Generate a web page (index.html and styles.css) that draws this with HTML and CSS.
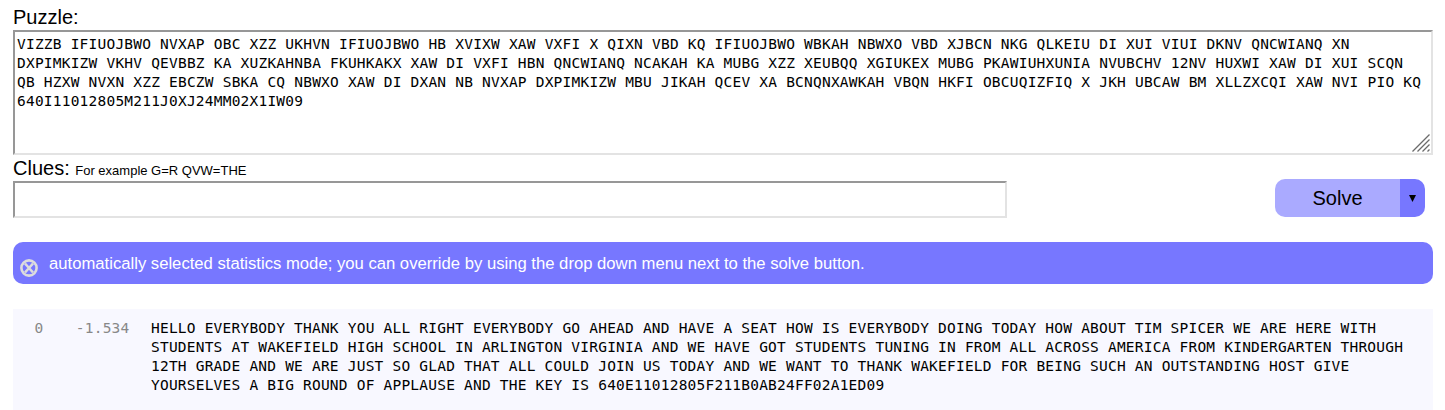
FILE: index.html
```html
<!DOCTYPE html>
<html lang="en">
<head>
<meta charset="utf-8">
<title>Puzzle Solver</title>
<link rel="stylesheet" href="styles.css">
</head>
<body>
<main class="page">
<label class="label" for="puzzle">Puzzle:</label>
<div class="puzzle-wrap">
<textarea id="puzzle" class="puzzle mono" spellcheck="false">VIZZB IFIUOJBWO NVXAP OBC XZZ UKHVN IFIUOJBWO HB XVIXW XAW VXFI X QIXN VBD KQ IFIUOJBWO WBKAH NBWXO VBD XJBCN NKG QLKEIU DI XUI VIUI DKNV QNCWIANQ XN
DXPIMKIZW VKHV QEVBBZ KA XUZKAHNBA FKUHKAKX XAW DI VXFI HBN QNCWIANQ NCAKAH KA MUBG XZZ XEUBQQ XGIUKEX MUBG PKAWIUHXUNIA NVUBCHV 12NV HUXWI XAW DI XUI SCQN
QB HZXW NVXN XZZ EBCZW SBKA CQ NBWXO XAW DI DXAN NB NVXAP DXPIMKIZW MBU JIKAH QCEV XA BCNQNXAWKAH VBQN HKFI OBCUQIZFIQ X JKH UBCAW BM XLLZXCQI XAW NVI PIO KQ
640I11012805M211J0XJ24MM02X1IW09</textarea>
<svg class="grip" viewBox="0 0 18 18"><path d="M0.5 17.5 17.5 0.5M5.5 17.5 17.5 5.5M10.5 17.5 17.5 10.5M15.5 17.5 17.5 15.5"/></svg>
</div>
<label class="label clues-label" for="clues">Clues: <small class="hint">For example G=R QVW=THE</small></label>
<div class="clues-row">
<input id="clues" class="clues" type="text">
<div class="solve-group">
<button class="solve">Solve</button>
<button class="mode" aria-label="Mode"><svg width="7" height="7" viewBox="0 0 7 7"><path d="M0 0H7L3.5 7Z"/></svg></button>
</div>
</div>
<div class="notice">
<svg class="close" viewBox="0 0 18 18"><circle cx="9" cy="9" r="7.6"/><path d="M5 4.5 13 13.5M13 4.5 5 13.5"/></svg>
<span class="message">automatically selected statistics mode; you can override by using the drop down menu next to the solve button.</span>
</div>
<div class="result mono">
<span class="index">0</span>
<span class="score">-1.534</span>
<div class="solution">HELLO EVERYBODY THANK YOU ALL RIGHT EVERYBODY GO AHEAD AND HAVE A SEAT HOW IS EVERYBODY DOING TODAY HOW ABOUT TIM SPICER WE ARE HERE WITH<br>STUDENTS AT WAKEFIELD HIGH SCHOOL IN ARLINGTON VIRGINIA AND WE HAVE GOT STUDENTS TUNING IN FROM ALL ACROSS AMERICA FROM KINDERGARTEN THROUGH<br>12TH GRADE AND WE ARE JUST SO GLAD THAT ALL COULD JOIN US TODAY AND WE WANT TO THANK WAKEFIELD FOR BEING SUCH AN OUTSTANDING HOST GIVE<br>YOURSELVES A BIG ROUND OF APPLAUSE AND THE KEY IS 640E11012805F211B0AB24FF02A1ED09</div>
</div>
</main>
</body>
</html>
```
FILE: styles.css
```css
* { box-sizing: border-box; }
body {
  margin: 0;
  background: #fff;
  color: #000;
  font-family: "Liberation Sans", Arial, sans-serif;
}
.page {
  display: flex;
  flex-direction: column;
  height: 410px;
  padding: 5px 12px 0 13px;
}
.mono {
  font-family: "DejaVu Sans Mono", monospace;
  font-size: 14.5px;
  line-height: 19px;
  letter-spacing: 0.214px;
}
.label { height: 25px; font-size: 20px; line-height: 25px; white-space: nowrap; }
.clues-label { height: 26px; line-height: 27px; }
.hint { font-size: 13px; }
.puzzle-wrap { position: relative; height: 125px; }
.puzzle, .clues {
  display: block;
  margin: 0;
  border: 2px solid;
  border-color: #979797 #e3e3e3 #e3e3e3 #979797;
  border-radius: 0;
  background: #fff;
  outline: none;
}
.puzzle {
  width: 100%;
  height: 100%;
  padding: 3px 0 0 2px;
  color: #000;
  white-space: pre;
  overflow: hidden;
  resize: none;
}
.grip {
  position: absolute;
  right: 3px;
  bottom: 3px;
  width: 18px;
  height: 18px;
  fill: none;
  stroke: #6b6b6b;
  stroke-width: 1.3;
}
.clues-row { display: flex; justify-content: space-between; height: 37px; padding-right: 8px; }
.clues { width: 994px; height: 37px; }
.solve-group {
  display: flex;
  width: 150px;
  height: 38px;
  margin-top: -2px;
  border-radius: 10px;
  overflow: hidden;
}
.solve, .mode { border: 0; padding: 0; color: #000; }
.solve {
  width: 125px;
  background: #aaf;
  font: 20px "Liberation Sans", Arial, sans-serif;
}
.mode { display: flex; align-items: center; justify-content: center; width: 25px; padding-right: 1px; background: #77f; }
.notice {
  display: flex;
  align-items: center;
  height: 42px;
  margin-top: 24px;
  padding-left: 7px;
  border-radius: 10px;
  background: #77f;
  color: #fff;
  font-size: 16.67px;
  white-space: nowrap;
}
.close {
  width: 18px;
  height: 18px;
  margin: 10px 11px 0 0;
  fill: none;
  stroke: #ddd;
  stroke-width: 2.6;
}
.message { padding-top: 2px; }
.result {
  display: grid;
  grid-template-columns: 17px 86px 1fr;
  column-gap: 0;
  flex: 1;
  margin-top: 25px;
  padding: 10px 0 0 13.5px;
  background: #f8f8ff;
  white-space: nowrap;
}
.index, .score { color: #888; text-align: right; }
.solution { padding-left: 21.5px; }
```
